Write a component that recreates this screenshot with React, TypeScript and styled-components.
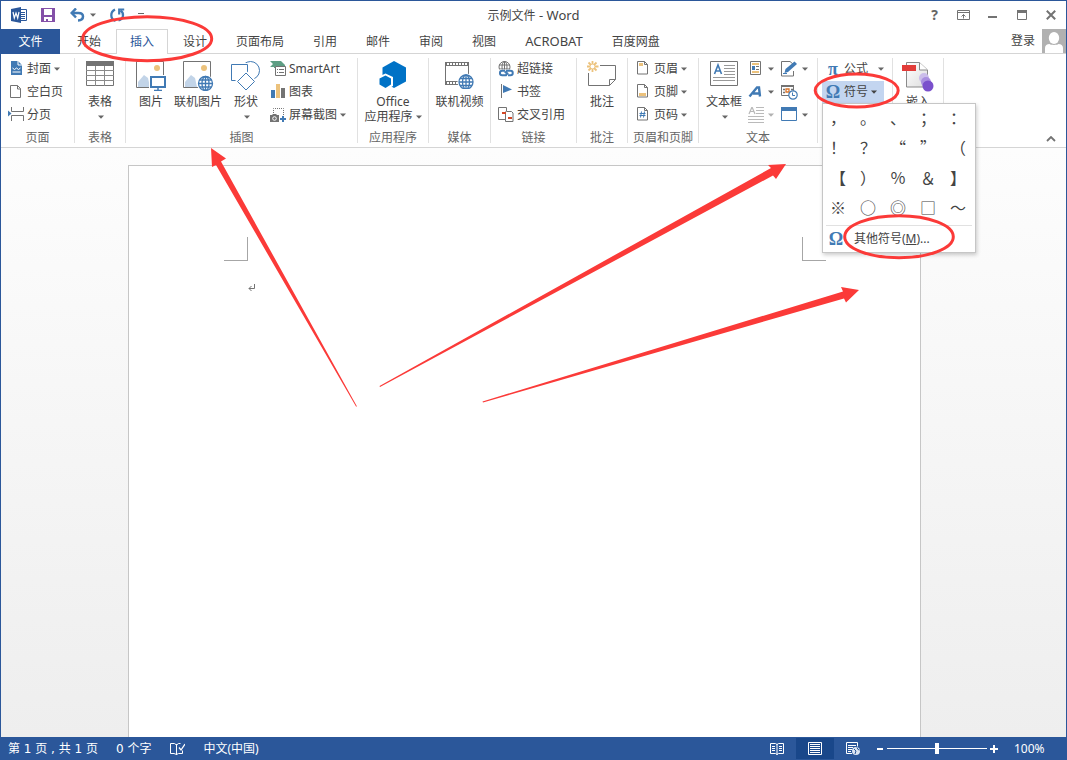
import React from 'react';
import styled, { createGlobalStyle, css } from 'styled-components';

const blue = '#2b579a';
const iconBlue = '#417ab4';
const grey = '#737373';
const amber = '#ecc27c';
const line = '#d5d5d5';

const GlobalStyle = createGlobalStyle`
  *, *::before, *::after { box-sizing: border-box; }
  body {
    margin: 0;
    font-family: "Noto Sans", "Noto Sans CJK SC", sans-serif;
    font-size: 12px;
    line-height: 16px;
    color: #444;
  }
  button, input { font: inherit; color: inherit; }
  svg { display: block; flex: none; }
`;

const Screen = styled.div`
  position: relative;
  min-height: 100vh;
  display: flex;
`;

const Frame = styled.div`
  flex: 1;
  min-width: 0;
  display: flex;
  flex-direction: column;
  background: #fff;
  border: 1px solid ${blue};
  border-bottom: 0;
`;

const plainButton = css`
  border: 0;
  background: none;
  padding: 0;
  cursor: default;
  white-space: nowrap;
`;

const LargeLatin = styled.span`
  font-size: 13px;
`;

/* ---------- title bar ---------- */

const TitleBar = styled.header`
  display: grid;
  grid-template-columns: 1fr auto 1fr;
  align-items: center;
  height: 28px;
`;

const QuickAccess = styled.div`
  display: flex;
  align-items: center;
  padding-left: 10px;
`;

const QuickButton = styled.button<{ $gap?: number }>`
  ${plainButton}
  display: flex;
  align-items: center;
  gap: 5px;
  margin-right: ${p => p.$gap ?? 12}px;
`;

const Title = styled.h1`
  margin: 0;
  font-size: 12px;
  font-weight: 400;
`;

const WindowButtons = styled.div`
  display: flex;
  justify-content: flex-end;
  padding-right: 1px;
`;

const WindowButton = styled.button`
  ${plainButton}
  width: 29px;
  height: 28px;
  display: flex;
  align-items: center;
  justify-content: center;
  font-size: 14px;
  font-weight: 700;
  color: #666;
`;

/* ---------- tabs ---------- */

const TabRow = styled.nav`
  display: flex;
  height: 25px;
  border-bottom: 1px solid ${line};
`;

const FileTab = styled.button`
  ${plainButton}
  width: 59px;
  height: 25px;
  margin-right: 3px;
  background: ${blue};
  color: #fff;
`;

const Tab = styled.button<{ $active?: boolean }>`
  ${plainButton}
  height: 25px;
  margin-right: 1px;
  padding: 0 13px 1px;
  border: 1px solid transparent;
  border-bottom: 0;
  ${p => p.$active && css`
    color: ${blue};
    background: #fff;
    border-color: ${line};
  `}
`;

const Account = styled.div`
  margin-left: auto;
  display: flex;
  align-items: center;
  gap: 7px;
`;

const SignIn = styled.button`
  ${plainButton}
`;

/* ---------- ribbon ---------- */

const Ribbon = styled.div`
  display: flex;
  height: 94px;
  border-bottom: 1px solid ${line};
`;

const Group = styled.section<{ $width: number }>`
  flex: none;
  width: ${p => p.$width}px;
  padding-top: 4px;
`;

const Separator = styled.i`
  flex: none;
  width: 1px;
  margin: 4px 0;
  background: #e1e1e1;
`;

const GroupBody = styled.div<{ $start?: number }>`
  display: flex;
  height: 69px;
  ${p => p.$start === undefined
    ? css`justify-content: center;`
    : css`padding-left: ${p.$start}px;`}
`;

const GroupName = styled.h2`
  margin: 0;
  font-size: 12px;
  font-weight: 400;
  line-height: 22px;
  text-align: center;
  white-space: nowrap;
  color: #666;
`;

const Column = styled.div<{ $left?: number }>`
  display: flex;
  flex-direction: column;
  margin-left: ${p => p.$left ?? 0}px;
`;

const SmallButton = styled.button<{ $faded?: boolean }>`
  ${plainButton}
  display: flex;
  align-items: center;
  gap: 3px;
  height: 23px;
  padding-bottom: 1px;
  opacity: ${p => (p.$faded ? 0.5 : 1)};
`;

const SymbolButton = styled(SmallButton)<{ $pressed?: boolean }>`
  width: 62px;
  padding-left: 3px;
  background: ${p => (p.$pressed ? '#c3d5f0' : 'none')};
`;

const FarCaret = styled.span`
  margin-left: auto;
`;

const BigButton = styled.button<{ $width: number }>`
  ${plainButton}
  width: ${p => p.$width}px;
  height: 69px;
  display: flex;
  flex-direction: column;
  align-items: center;
`;

const BigIcon = styled.span`
  height: 36px;
  padding-top: 3px;
`;

const BigCaret = styled.span`
  padding: 5px 0 0 2px;
`;

const SecondLine = styled.span`
  display: flex;
  align-items: center;
  gap: 3px;
  margin-top: -1px;
`;

const Letter = styled.span`
  width: 16px;
  font: 700 18px/16px "Liberation Serif", serif;
  text-align: center;
  color: ${iconBlue};
`;

const CollapseButton = styled.button`
  ${plainButton}
  align-self: flex-end;
  margin-left: auto;
  padding: 5px 10px;
`;

/* ---------- symbol menu ---------- */

const MenuAnchor = styled.div`
  position: relative;
`;

const SymbolMenu = styled.div`
  position: absolute;
  z-index: 2;
  top: 22px;
  left: 0;
  width: 154px;
  border: 1px solid #c6c6c6;
  background: #fff;
  box-shadow: 1px 2px 4px rgba(0, 0, 0, 0.2);
`;

const SymbolGrid = styled.div`
  display: grid;
  grid-template-columns: repeat(5, 30px);
  grid-auto-rows: 30px;
  height: 121px;
`;

const SymbolCell = styled.button`
  ${plainButton}
  padding-bottom: 4px;
  font: 16px/26px "Noto Sans CJK SC", sans-serif;
`;

const MoreSymbols = styled.button`
  ${plainButton}
  display: flex;
  align-items: center;
  gap: 10px;
  width: 146px;
  height: 27px;
  margin: 0 3px;
  padding-left: 2px;
  border-top: 1px solid #e1e1e1;
`;

/* ---------- document ---------- */

const Canvas = styled.main`
  flex: 1;
  display: flex;
  justify-content: center;
  padding: 17px 18px 0 0;
  background: linear-gradient(#fdfdfd, #eee);
`;

const Paper = styled.article`
  width: 793px;
  padding: 71px 94px 0 95px;
  border: 1px solid #c6c6c6;
  border-bottom: 0;
  background: #fff;
`;

const CropMarks = styled.div`
  display: flex;
  justify-content: space-between;
`;

const CropMark = styled.i<{ $side: 'left' | 'right' }>`
  width: 24px;
  height: 24px;
  border-bottom: 1px solid #a6a6a6;
  ${p => (p.$side === 'left' ? 'border-right' : 'border-left')}: 1px solid #a6a6a6;
`;

const Paragraph = styled.p`
  margin: 22px 0 0 24px;
`;

/* ---------- status bar ---------- */

const StatusBar = styled.footer`
  display: flex;
  align-items: center;
  height: 23px;
  padding: 0 18px 0 7px;
  background: ${blue};
  color: #fff;
  white-space: nowrap;
`;

const StatusItem = styled.button<{ $wide?: boolean }>`
  ${plainButton}
  margin-right: 18px;
  ${p => p.$wide && css`font-family: "DejaVu Sans", "Noto Sans CJK SC", sans-serif;`}
`;

const ViewButtons = styled.div`
  display: flex;
  margin: 0 1px 0 auto;
`;

const ViewButton = styled.button<{ $active?: boolean }>`
  ${plainButton}
  width: 38px;
  height: 21px;
  display: flex;
  align-items: center;
  justify-content: center;
  background: ${p => (p.$active ? '#19478a' : 'none')};
`;

const ZoomButton = styled.button`
  ${plainButton}
  padding: 0 3px;
`;

const ZoomSlider = styled.input`
  appearance: none;
  width: 100px;
  height: 12px;
  margin: 0;
  background: linear-gradient(#fff, #fff) center / 100% 1px no-repeat;
  &::-webkit-slider-thumb {
    appearance: none;
    width: 4px;
    height: 11px;
    background: #fff;
  }
`;

const ZoomValue = styled.button`
  ${plainButton}
  width: 34px;
  margin-left: 13px;
  text-align: left;
`;

const Annotations = styled.svg`
  position: absolute;
  z-index: 3;
  inset: 0;
  width: 100%;
  height: 100%;
  pointer-events: none;
`;

/* ---------- icons ---------- */

type IconProps = { w?: number; h?: number; children: React.ReactNode };
const Icon = ({ w = 16, h = 16, children }: IconProps) => (
  <svg width={w} height={h} viewBox={`0 0 ${w} ${h}`} fill="none" aria-hidden="true">
    {children}
  </svg>
);

const Caret = ({ color = '#666' }: { color?: string }) => (
  <Icon w={6} h={4}><path d="M0 0.5h6L3 3.7z" fill={color} /></Icon>
);

const WordIcon = () => (
  <Icon>
    <path d="M9 2.5h6.5v11H9" stroke={blue} fill="#fff" />
    <path d="M10 5.5h4M10 7.5h4M10 9.5h4M10 11.5h4" stroke={blue} />
    <path d="M0 2l10-2v16L0 14z" fill={blue} />
    <path d="M2 5l1.3 6L5 6l1.7 5L8 5" stroke="#fff" strokeWidth="1.2" />
  </Icon>
);
const SaveIcon = () => (
  <Icon w={14} h={14}>
    <path d="M0 0h14v14H0z" fill="#8450a8" />
    <path d="M3 1h8v6H3zM3 9h8v4H3z" fill="#fff" />
    <path d="M5 11h2v3H5z" fill="#8450a8" />
  </Icon>
);
const UndoIcon = () => (
  <Icon w={15} h={14}>
    <path d="M2 5h6.500C12 5 13 6.800 13 8.600S12 12.300 8 12.500" stroke={iconBlue} strokeWidth="2.500" />
    <path d="M6 .5L1.700 5L6 9.500" stroke={iconBlue} strokeWidth="2.500" />
  </Icon>
);
const RedoIcon = () => (
  <Icon w={15} h={14}>
    <path d="M5 1.500C0 4 0 11 5.500 12.800M8.500 12.500C14 11 14.200 5 10.500 2.500" stroke={iconBlue} strokeWidth="2.300" />
    <path d="M9.200 6.500V1.500h5" stroke={iconBlue} strokeWidth="2.200" />
  </Icon>
);
const RibbonOptionsIcon = () => (
  <Icon w={13} h={10}>
    <path d="M.5.5h12v9H.5zM.5 2.500h12" stroke={grey} />
    <path d="M6.500 8.500V4.500M4.500 6.500l2-2 2 2" stroke={grey} />
  </Icon>
);
const MinimizeIcon = () => <Icon w={9} h={10}><path d="M0 6h9v2H0z" fill={grey} /></Icon>;
const MaximizeIcon = () => (
  <Icon w={10} h={10}><path d="M.5.5h9v9H.5z" stroke={grey} /><path d="M0 0h10v3H0z" fill={grey} /></Icon>
);
const CloseIcon = () => (
  <Icon w={10} h={10}><path d="M.8.8l8.400 8.400M9.200.8L.8 9.200" stroke={grey} strokeWidth="2" /></Icon>
);
const Avatar = () => (
  <Icon w={24} h={24}>
    <path d="M0 0h24v24H0z" fill="#b1b1b1" />
    <path d="M3 24v-5c0-2.500 2-4 4.500-4 1.500 1.200 7.500 1.200 9 0 2.500 0 4.500 1.500 4.500 4v5z" fill="#fff" />
    <ellipse cx="12" cy="9" rx="5.200" ry="6" fill="#fff" />
  </Icon>
);

const CoverIcon = () => (
  <Icon>
    <path d="M3 0h7l4 4v10H3z" fill={iconBlue} />
    <path d="M10 0v4h4" stroke="#fff" />
    <path d="M4.500 7l2 1.500L8.500 7l2 1.500 2-1.500M4.500 11h8" stroke="#fff" />
  </Icon>
);
const BlankPageIcon = () => (
  <Icon><path d="M2.500 1.500h7l3 3v9h-10zM9.500 1.500v3.500h3" stroke={grey} /></Icon>
);
const PageBreakIcon = () => (
  <Icon>
    <path d="M3.500 0v4.500h12V0M3.500 14V8.500h12V14" stroke={grey} />
    <path d="M0 3.500l3.500 3L0 9.500z" fill={iconBlue} />
  </Icon>
);
const TableIcon = () => (
  <Icon w={28} h={26}>
    <path d="M.5.5h27v24H.5z" fill="#fff" stroke={grey} />
    <path d="M0 0h28v5H0z" fill={grey} />
    <path d="M9.500 5v20M18.500 5v20M0 9.500h28M0 14.500h28M0 19.500h28" stroke="#8a8a8a" />
  </Icon>
);
const photo = (
  <>
    <path d="M1.500.5h27v26H1.500z" fill="#fff" stroke={grey} />
    <path d="M3 26V21l6-7 4 3 2 9z" fill="#c2d4e8" />
    <circle cx="22" cy="7" r="3" fill={amber} />
  </>
);
const GlobeShape = ({ x, y, r = 7 }: { x: number; y: number; r?: number }) => (
  <g stroke={iconBlue} strokeWidth="1.300">
    <circle cx={x} cy={y} r={r} fill="#fff" />
    <ellipse cx={x} cy={y} rx={r / 2} ry={r} />
    <path d={`M${x} ${y - r}V${y + r}M${x - r} ${y}H${x + r}M${x - r * 0.85} ${y - r / 2}H${x + r * 0.85}M${x - r * 0.85} ${y + r / 2}H${x + r * 0.85}`} />
  </g>
);
const PictureIcon = () => (
  <Icon w={32} h={30}>
    {photo}
    <path d="M14 14h18v16H14z" fill="#fff" />
    <path d="M16 16h14v10H16z" fill="#fff" stroke={iconBlue} strokeWidth="2" />
    <path d="M23 26v3M19 29.500h8" stroke={iconBlue} strokeWidth="1.500" />
  </Icon>
);
const OnlinePictureIcon = () => (
  <Icon w={32} h={30}>
    {photo}
    <circle cx="23.500" cy="22.500" r="8.500" fill="#fff" />
    <GlobeShape x={23.5} y={22.5} r={7} />
  </Icon>
);
const ShapesIcon = () => (
  <Icon w={30} h={30}>
    <circle cx="19.500" cy="9.500" r="9" stroke={iconBlue} />
    <path d="M-1 2h20v19H-1z" fill="#fff" />
    <path d="M.5 3.500h16v16H.5z" fill="#fff" stroke={iconBlue} />
    <path d="M15 9.500l11 10.500-11 10.500L4 20z" fill="#fff" />
    <path d="M15 12l8.500 8.500-8.500 8.500-8.500-8.500z" fill="#fff" stroke={iconBlue} />
  </Icon>
);
const SmartArtIcon = () => (
  <Icon>
    <path d="M0 0h11l4 4v3H4V6L0 6l3-3z" fill="#5e9e84" />
    <path d="M5.500 5.500h10v9h-10z" fill="#fff" stroke={grey} />
    <path d="M7 8.500h1M9 8.500h5M7 11.500h1M9 11.500h5" stroke={grey} />
  </Icon>
);
const ChartIcon = () => (
  <Icon>
    <path d="M1 6h4v8H1z" fill={iconBlue} />
    <path d="M6 0h4v14H6z" fill={amber} />
    <path d="M11 4h4v10h-4z" fill={grey} />
  </Icon>
);
const ScreenshotIcon = () => (
  <Icon>
    <path d="M3.500 6V1.500h10V9" stroke={grey} strokeDasharray="1 1" />
    <path d="M0 8h2l1-1h3l1 1h2v7H0z" fill={grey} />
    <circle cx="4.500" cy="11.500" r="1.800" stroke="#fff" />
    <path d="M13 9v6M10 12h6" stroke={iconBlue} strokeWidth="2" />
  </Icon>
);
const OfficeIcon = () => (
  <Icon w={28} h={28}>
    <path d="M15 0l12 6.500v14L15 27 3.500 20.500v-14z" fill="#0072c6" />
    <path d="M6.500 12.500l7.500 3.500v9l-7.500 4-7.500-4v-9z" fill="#fff" />
    <path d="M6.500 14.500l5.500 3v6l-5.500 3.500-6-3.500v-6z" fill="#0072c6" />
  </Icon>
);
const VideoIcon = () => (
  <Icon w={30} h={28}>
    <path d="M.5 1.500h23v22H.5z" stroke={grey} fill="#fff" />
    <path d="M0 3h24M0 22h14" stroke={grey} strokeWidth="4" />
    <path d="M2 3h21M2 22h12" stroke="#fff" strokeWidth="2" strokeDasharray="2 1" />
    <circle cx="21" cy="21" r="8.500" fill="#fff" />
    <GlobeShape x={21} y={21} r={7} />
  </Icon>
);
const LinkIcon = () => (
  <Icon w={16}>
    <g stroke={grey}>
      <circle cx="6.500" cy="6" r="5.500" />
      <path d="M6.500.5v11M1 4h11M1 8h11" /><ellipse cx="6.500" cy="6" rx="2.500" ry="5.500" />
    </g>
    <path d="M1 8.500h15V16H1z" fill="#fff" />
    <path d="M7 9.700H4.200a2.200 2.200 0 000 4.500H8l2-2.500M10 14.200h2.500a2.200 2.200 0 000-4.500H9l-2 2.500" stroke={iconBlue} strokeWidth="2" />
  </Icon>
);
const BookmarkIcon = () => (
  <Icon><path d="M3 0h1v14H3z" fill={grey} /><path d="M5 1l9 4.500L5 9z" fill={iconBlue} /></Icon>
);
const CrossRefIcon = () => (
  <Icon>
    <path d="M.5.5h8v12h-8z" stroke={grey} fill="#fff" />
    <path d="M8.500 4.500h5l1.500 1.500v8.500H7.500V4.500" stroke={grey} fill="#fff" />
    <path d="M4 5h4v2H4zM10 10h4v2h-4z" fill="#d24726" />
  </Icon>
);
const CommentIcon = () => (
  <Icon w={30} h={28}>
    <path d="M13 4.500h15.500v14l-6 6H1.500V12M22.500 24.500v-6h6" stroke={grey} />
    <path d="M5.500 0v11M0 5.500h11.500M1.500 1.500l8 8M9.500 1.500l-8 8" stroke={amber} strokeWidth="1.800" />
    <circle cx="5.500" cy="5.500" r="2" fill="#fff" />
  </Icon>
);
const pageOutline = <path d="M2.500.5h7l3 3v9.500h-10zM9.500.5v3h3" stroke={grey} />;
const HeaderIcon = () => <Icon>{pageOutline}<path d="M4 2h4v3H4z" fill={amber} /></Icon>;
const FooterIcon = () => <Icon>{pageOutline}<path d="M4 9h7v3H4z" fill={amber} /></Icon>;
const PageNumberIcon = () => (
  <Icon>{pageOutline}<path d="M6.500 4.500l-1 6M9.500 4.500l-1 6M4.500 6.500h6M4.500 8.500h6" stroke={iconBlue} /></Icon>
);
const TextBoxIcon = () => (
  <Icon w={28} h={26}>
    <path d="M.5.5h27v24H.5z" stroke={grey} fill="#fff" />
    <path d="M4.500 13L8 4l3.500 9M5.500 10h5" stroke={iconBlue} strokeWidth="1.600" />
    <path d="M14 4.500h11M14 7.500h11M14 10.500h11M14 13.500h11M3 16.500h22M3 19.500h22" stroke="#999" />
  </Icon>
);
const QuickPartsIcon = () => (
  <Icon w={18}>
    <path d="M3.500.5h10v13h-10z" stroke={grey} />
    <path d="M5 2h7v2H5zM5 10h7v2H5z" fill={amber} />
    <path d="M5 5h3v4H5z" fill={iconBlue} />
    <path d="M9 5.500h3M9 8.500h3" stroke={grey} />
  </Icon>
);
const WordArtIcon = () => (
  <Icon w={18}><path d="M2.500 12.500L10 3.500h2L13 12.500M6 9.500h6.500" stroke={iconBlue} strokeWidth="2.400" /></Icon>
);
const DropCapIcon = () => (
  <Icon w={18}>
    <path d="M2 7L5 0l3 7M3 4.500h4" stroke={grey} strokeWidth="1.200" />
    <path d="M9 .5h8M9 3.500h8M9 6.500h8M1 9.500h16M1 12.500h16M1 15.500h16" stroke="#777" />
  </Icon>
);
const SignatureIcon = () => (
  <Icon w={18}>
    <path d="M12.500 10v5H.5V.5H9l3.500 3" stroke={grey} />
    <path d="M3.500 12l1-4L13.500 .5 16 3 7 11z" fill={iconBlue} />
    <path d="M2 12.500h4" stroke={iconBlue} />
  </Icon>
);
const DateIcon = () => (
  <Icon w={18}>
    <path d="M.5 1.500h12v10H.5z" stroke={grey} />
    <path d="M0 1h13v2H0z" fill={grey} />
    <path d="M2 5.500h2M2 8.500h2M10 5.500h2" stroke={grey} strokeWidth="1.500" />
    <path d="M5 5h3v3H5z" stroke="#d9742b" strokeWidth="1.300" />
    <circle cx="12" cy="11" r="4.200" fill="#fff" stroke={iconBlue} strokeWidth="1.200" />
    <path d="M11.500 8.500V11.500h2.500" stroke={iconBlue} />
  </Icon>
);
const ObjectIcon = () => (
  <Icon w={18}><path d="M.5.5h15v13H.5z" stroke={iconBlue} /><path d="M0 0h16v4H0z" fill={iconBlue} /></Icon>
);
const EmbedIcon = () => (
  <Icon w={32} h={31}>
    <defs>
      <linearGradient id="sheet" x1="0" y1="0" x2="1" y2="1">
        <stop offset="0" stopColor="#fff" /><stop offset="1" stopColor="#ddd" />
      </linearGradient>
    </defs>
    <path d="M4.500 1.500h13l8 7.500v17h-21z" fill="url(#sheet)" stroke="#8a8a8a" />
    <path d="M17.500 1.500V9h8" fill="#fff" stroke="#8a8a8a" />
    <path d="M0 4h14v6H0z" fill="#e23c39" />
    <circle cx="22" cy="17" r="5" fill="#cbbdea" />
    <circle cx="24" cy="21" r="5" fill="#a98fe0" />
    <circle cx="26" cy="25" r="5.500" fill="#7a50cc" />
  </Icon>
);
const ProofIcon = () => (
  <Icon>
    <path d="M7.500 3v11M7.500 13.500L5 12.500H1.500v-10H5.500L7.500 4l2-1.500h2M7.500 13.500l2-1h4v-3" stroke="#fff" />
    <path d="M10 6.500l2 2.500 4-6" stroke="#fff" strokeWidth="1.300" />
  </Icon>
);
const ReadModeIcon = () => (
  <Icon w={14} h={13}>
    <path d="M7 2v11M.5 1.500h5L7 2.500l1.500-1h5v10h-5L7 12.500l-1.500-1h-5z" stroke="#fff" />
    <path d="M2 4.500h3M2 6.500h3M2 8.500h3M9 4.500h3M9 6.500h3M9 8.500h3" stroke="#fff" />
  </Icon>
);
const PrintLayoutIcon = () => (
  <Icon w={14} h={13}>
    <path d="M.5.5h13v12H.5z" stroke="#fff" />
    <path d="M2 2.500h10M2 4.500h10M2 6.500h10M2 8.500h10M2 10.500h10" stroke="#fff" />
  </Icon>
);
const WebLayoutIcon = () => (
  <Icon w={14} h={13}>
    <path d="M6 11.500H.5V.5h11v4M2 3.500h8M2 5.500h5M2 7.500h4M2 9.500h3" stroke="#fff" />
    <circle cx="10" cy="9" r="4" fill="#dce5f2" />
    <path d="M8 7l2 2-1 3M11 5.500l1 2 1.500.5" stroke={blue} />
  </Icon>
);

/* ---------- data ---------- */

const tabs = ['开始', '插入', '设计', '页面布局', '引用', '邮件', '审阅', '视图', 'ACROBAT', '百度网盘'];
const symbols = [...'，。、；：！？“”（【）％＆】※○◎□～'];

type GroupProps = {
  name: string;
  width: number;
  start?: number;
  covered?: boolean;
  children: React.ReactNode;
};
const RibbonGroup = ({ name, width, start, covered, children }: GroupProps) => (
  <>
    <Group $width={width} aria-label={name}>
      <GroupBody $start={start}>{children}</GroupBody>
      {!covered && <GroupName>{name}</GroupName>}
    </Group>
    <Separator />
  </>
);

type SmallProps = { icon: React.ReactNode; text?: string; label?: string; menu?: boolean; faded?: boolean };
const Small = ({ icon, text, label, menu, faded }: SmallProps) => (
  <SmallButton $faded={faded} aria-label={label}>
    {icon}
    {text}
    {menu && <Caret />}
  </SmallButton>
);

type BigProps = { icon: React.ReactNode; text: string; width: number; menu?: boolean; children?: React.ReactNode };
const Big = ({ icon, text, width, menu, children }: BigProps) => (
  <BigButton $width={width}>
    <BigIcon>{icon}</BigIcon>
    {text}
    {menu && <BigCaret><Caret /></BigCaret>}
    {children}
  </BigButton>
);

export default function App() {
  return (
    <Screen>
      <GlobalStyle />
      <Frame>
        <TitleBar>
          <QuickAccess>
            <QuickButton $gap={14} aria-label="Word"><WordIcon /></QuickButton>
            <QuickButton $gap={15} aria-label="保存"><SaveIcon /></QuickButton>
            <QuickButton $gap={14} aria-label="撤消"><UndoIcon /><Caret /></QuickButton>
            <QuickButton $gap={13} aria-label="重复"><RedoIcon /></QuickButton>
            <QuickButton aria-label="自定义快速访问工具栏">
              <Icon w={6} h={4}><path d="M0 .5h6" stroke="#666" /></Icon>
            </QuickButton>
          </QuickAccess>
          <Title>示例文件<LargeLatin> - Word</LargeLatin></Title>
          <WindowButtons>
            <WindowButton>?</WindowButton>
            <WindowButton aria-label="功能区显示选项"><RibbonOptionsIcon /></WindowButton>
            <WindowButton aria-label="最小化"><MinimizeIcon /></WindowButton>
            <WindowButton aria-label="最大化"><MaximizeIcon /></WindowButton>
            <WindowButton aria-label="关闭"><CloseIcon /></WindowButton>
          </WindowButtons>
        </TitleBar>

        <TabRow>
          <FileTab>文件</FileTab>
          {tabs.map(t => (
            <Tab key={t} $active={t === '插入'}>
              {t === 'ACROBAT' ? <LargeLatin>{t}</LargeLatin> : t}
            </Tab>
          ))}
          <Account><SignIn>登录</SignIn><Avatar /></Account>
        </TabRow>

        <Ribbon>
          <RibbonGroup name="页面" width={73} start={7}>
            <Column>
              <Small icon={<CoverIcon />} text="封面" menu />
              <Small icon={<BlankPageIcon />} text="空白页" />
              <Small icon={<PageBreakIcon />} text="分页" />
            </Column>
          </RibbonGroup>
          <RibbonGroup name="表格" width={50}>
            <Big icon={<TableIcon />} text="表格" width={40} menu />
          </RibbonGroup>
          <RibbonGroup name="插图" width={231} start={6}>
            <Big icon={<PictureIcon />} text="图片" width={38} />
            <Big icon={<OnlinePictureIcon />} text="联机图片" width={56} />
            <Big icon={<ShapesIcon />} text="形状" width={40} menu />
            <Column $left={4}>
              <Small icon={<SmartArtIcon />} text="SmartArt" />
              <Small icon={<ChartIcon />} text="图表" />
              <Small icon={<ScreenshotIcon />} text="屏幕截图" menu />
            </Column>
          </RibbonGroup>
          <RibbonGroup name="应用程序" width={70}>
            <Big icon={<OfficeIcon />} text="Office" width={66}>
              <SecondLine>应用程序<Caret /></SecondLine>
            </Big>
          </RibbonGroup>
          <RibbonGroup name="媒体" width={61}>
            <Big icon={<VideoIcon />} text="联机视频" width={56} />
          </RibbonGroup>
          <RibbonGroup name="链接" width={85} start={7}>
            <Column>
              <Small icon={<LinkIcon />} text="超链接" />
              <Small icon={<BookmarkIcon />} text="书签" />
              <Small icon={<CrossRefIcon />} text="交叉引用" />
            </Column>
          </RibbonGroup>
          <RibbonGroup name="批注" width={50}>
            <Big icon={<CommentIcon />} text="批注" width={40} />
          </RibbonGroup>
          <RibbonGroup name="页眉和页脚" width={70} start={7}>
            <Column>
              <Small icon={<HeaderIcon />} text="页眉" menu />
              <Small icon={<FooterIcon />} text="页脚" menu />
              <Small icon={<PageNumberIcon />} text="页码" menu />
            </Column>
          </RibbonGroup>
          <RibbonGroup name="文本" width={118} start={4}>
            <Big icon={<TextBoxIcon />} text="文本框" width={42} menu />
            <Column $left={2}>
              <Small icon={<QuickPartsIcon />} label="文档部件" menu />
              <Small icon={<WordArtIcon />} label="艺术字" menu />
              <Small icon={<DropCapIcon />} label="首字下沉" menu faded />
            </Column>
            <Column $left={7}>
              <Small icon={<SignatureIcon />} label="签名行" menu />
              <Small icon={<DateIcon />} label="日期和时间" />
              <Small icon={<ObjectIcon />} label="对象" menu />
            </Column>
          </RibbonGroup>
          <RibbonGroup name="符号" width={74} start={4} covered>
            <Column>
              <SymbolButton><Letter>π</Letter>公式<FarCaret><Caret /></FarCaret></SymbolButton>
              <MenuAnchor>
                <SymbolButton $pressed aria-expanded="true"><Letter>Ω</Letter>符号<Caret color="#444" /></SymbolButton>
                <SymbolMenu role="menu">
                  <SymbolGrid>
                    {symbols.map(s => <SymbolCell key={s} role="menuitem">{s}</SymbolCell>)}
                  </SymbolGrid>
                  <MoreSymbols role="menuitem">
                    <Letter>Ω</Letter>
                    <span>其他符号(<u>M</u>)...</span>
                  </MoreSymbols>
                </SymbolMenu>
              </MenuAnchor>
            </Column>
          </RibbonGroup>
          <RibbonGroup name="嵌入" width={50} covered>
            <Big icon={<EmbedIcon />} text="嵌入" width={40} />
          </RibbonGroup>
          <CollapseButton aria-label="折叠功能区">
            <Icon w={10} h={6}><path d="M1 5l4-4 4 4" stroke={grey} strokeWidth="1.800" /></Icon>
          </CollapseButton>
        </Ribbon>

        <Canvas>
          <Paper>
            <CropMarks><CropMark $side="left" /><CropMark $side="right" /></CropMarks>
            <Paragraph>
              <Icon w={8} h={9}><path d="M6.500 1v4.500H1M3.500 3L1 5.500 3.500 8" stroke={grey} /></Icon>
            </Paragraph>
          </Paper>
        </Canvas>

        <StatusBar>
          <StatusItem $wide>第 1 页 , 共 1 页</StatusItem>
          <StatusItem $wide>0 个字</StatusItem>
          <StatusItem aria-label="校对"><ProofIcon /></StatusItem>
          <StatusItem>中文(中国)</StatusItem>
          <ViewButtons>
            <ViewButton aria-label="阅读视图"><ReadModeIcon /></ViewButton>
            <ViewButton $active aria-label="页面视图"><PrintLayoutIcon /></ViewButton>
            <ViewButton aria-label="Web 版式视图"><WebLayoutIcon /></ViewButton>
          </ViewButtons>
          <ZoomButton aria-label="缩小"><Icon w={8} h={10}><path d="M1 4h6v2H1z" fill="#fff" /></Icon></ZoomButton>
          <ZoomSlider type="range" min={0} max={100} defaultValue={50} aria-label="显示比例" />
          <ZoomButton aria-label="放大"><Icon w={8} h={10}><path d="M0 4h8v2H0zM3 1h2v8H3z" fill="#fff" /></Icon></ZoomButton>
          <ZoomValue>100%</ZoomValue>
        </StatusBar>
      </Frame>

      <Annotations aria-hidden="true">
        <g fill="none" stroke="#fb3a38" strokeWidth="3">
          <ellipse cx="147.200" cy="38.700" rx="64.500" ry="22" />
          <ellipse cx="856.700" cy="90.500" rx="41.500" ry="16.500" />
          <ellipse cx="899" cy="236.700" rx="54.300" ry="21" />
        </g>
        <g fill="#fb3a38">
          <path d="M211 148L226 158.500L221 161.500L357 406.500L356 406.500L216 165L212 167z" />
          <path d="M786 164L776 179L773 175.500L380 387L379.500 386L771 168L768 165z" />
          <path d="M859 290L846 302.500L844 298.500L483 402.500L482.500 401.500L843 291.500L841 287z" />
        </g>
      </Annotations>
    </Screen>
  );
}
